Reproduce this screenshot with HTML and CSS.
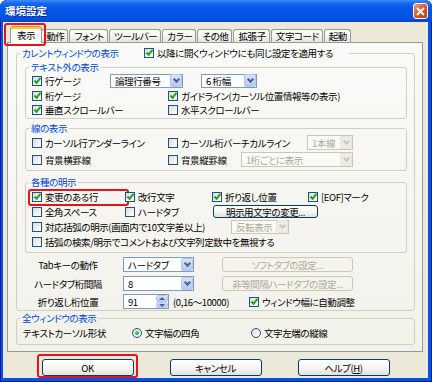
FILE: index.html
```html
<!DOCTYPE html>
<html>
<head>
	<meta charset="utf-8">
	<title>環境設定</title>
	<link rel="stylesheet" href="styles.css">
</head>
<body>
	<div class="window">
		<div class="titlebar">
			<span class="title">環境設定</span>
			<span class="close"><svg width="9" height="9" viewBox="0 0 9 9"><path d="M1 1L8 8M8 1L1 8" stroke="#fff" stroke-width="1.8"/></svg></span>
		</div>
		<div class="client">
			<div class="tabs">
				<div class="tab cur">表示</div>
				<div class="tab">動作</div>
				<div class="tab">フォント</div>
				<div class="tab">ツールバー</div>
				<div class="tab">カラー</div>
				<div class="tab">その他</div>
				<div class="tab">拡張子</div>
				<div class="tab">文字コード</div>
				<div class="tab">起動</div>
			</div>
			<div class="panel">
				<fieldset class="group outer">
					<legend class="head">
						<span class="head-text">カレントウィンドウの表示</span>
						<label class="chk on"><i></i>以降に開くウィンドウにも同じ設定を適用する</label>
					</legend>
					<div class="outer-body">
						<fieldset class="group inner gauge">
							<legend>テキスト外の表示</legend>
							<div class="row">
								<label class="chk on col-gauge"><i></i>行ゲージ</label>
								<span class="combo sel-gauge"><span>論理行番号</span><b></b></span>
								<span class="combo sel-digits"><span>6 桁幅</span><b></b></span>
							</div>
							<div class="row">
								<label class="chk on col1"><i></i>桁ゲージ</label>
								<label class="chk on"><i></i>ガイドライン(カーソル位置情報等の表示)</label>
							</div>
							<div class="row">
								<label class="chk on col1"><i></i>垂直スクロールバー</label>
								<label class="chk"><i></i>水平スクロールバー</label>
							</div>
						</fieldset>
						<fieldset class="group inner lines">
							<legend>線の表示</legend>
							<div class="row">
								<label class="chk col1"><i></i>カーソル行アンダーライン</label>
								<label class="chk col-vline"><i></i>カーソル桁バーチカルライン</label>
								<span class="combo off sel-vline"><span>1本線</span><b></b></span>
							</div>
							<div class="row">
								<label class="chk col1"><i></i>背景横罫線</label>
								<label class="chk col-rule"><i></i>背景縦罫線</label>
								<span class="combo off sel-rule"><span>1桁ごとに表示</span><b></b></span>
							</div>
						</fieldset>
						<fieldset class="group inner marks">
							<legend>各種の明示</legend>
							<div class="mark-grid">
								<label class="chk on changed"><i></i>変更のある行</label>
								<label class="chk on"><i></i>改行文字</label>
								<label class="chk on"><i></i>折り返し位置</label>
								<label class="chk on"><i></i>[EOF]マーク</label>
								<label class="chk"><i></i>全角スペース</label>
								<label class="chk"><i></i>ハードタブ</label>
								<span class="btn btn-marks">明示用文字の変更...</span>
							</div>
							<div class="row">
								<label class="chk col-paren"><i></i>対応括弧の明示(画面内で10文字差以上)</label>
								<span class="combo off sel-paren"><span>反転表示</span><b></b></span>
							</div>
							<div class="row">
								<label class="chk"><i></i>括弧の検索/明示でコメントおよび文字列定数中を無視する</label>
							</div>
						</fieldset>
						<div class="tabrows">
							<div class="tabrow">
								<span class="tabrow-label">Tabキーの動作</span>
								<span class="combo sel-tab"><span>ハードタブ</span><b></b></span>
								<span class="btn off btn-tab">ソフトタブの設定...</span>
							</div>
							<div class="tabrow">
								<span class="tabrow-label">ハードタブ桁間隔</span>
								<span class="combo sel-tab"><span>8</span><b></b></span>
								<span class="btn off btn-tab">非等間隔ハードタブの設定...</span>
							</div>
							<div class="tabrow">
								<span class="tabrow-label">折り返し桁位置</span>
								<span class="spin"><span>91</span><b><em class="up"></em><em class="down"></em></b></span>
								<span class="range">(0,16～10000)</span>
								<label class="chk on"><i></i>ウィンドウ幅に自動調整</label>
							</div>
						</div>
					</div>
				</fieldset>
				<fieldset class="group outer all">
					<legend>全ウィンドウの表示</legend>
					<div class="cursor-row">
						<span class="cursor-label">テキストカーソル形状</span>
						<label class="radio on cursor-box"><i></i>文字幅の四角</label>
						<label class="radio"><i></i>文字左端の縦線</label>
					</div>
				</fieldset>
			</div>
			<div class="buttons">
				<span class="btn ok">OK</span>
				<span class="btn">キャンセル</span>
				<span class="btn">ヘルプ(<u>H</u>)</span>
			</div>
		</div>
	</div>
</body>
</html>
```

FILE: styles.css
```css
*{
	box-sizing: border-box;
}
body{
	margin: 0;
	font-family: "Noto Sans CJK JP", "Noto Sans CJK SC", sans-serif;
	font-size: 9.5px;
	line-height: 12px;
	letter-spacing: -0.4px;
	font-feature-settings: "palt";
	color: #000;
	background-color: #fff;
}
.window{
	display: flex;
	flex-direction: column;
	width: 432px;
	height: 382px;
	background-color: #0553E3;
	border-radius: 7px 7px 0 0;
	box-shadow: inset 0 0 0 1px #0019A0;
	overflow: hidden;
}
.titlebar{
	display: flex;
	align-items: center;
	justify-content: space-between;
	height: 22px;
	padding: 0 4px 0 5px;
	background: linear-gradient(#3D8DF7 0, #1A6BF0 3px, #0859E6 7px, #0055E3 13px, #0050DC 19px, #0046CC 22px);
}
.title{
	color: #fff;
	font-size: 10.5px;
	font-weight: bold;
	letter-spacing: 0;
	text-shadow: 1px 1px 0 #0B2C8F;
}
.close{
	display: flex;
	align-items: center;
	justify-content: center;
	width: 15px;
	height: 16px;
	border: 1px solid #fff;
	border-radius: 3px;
	background: linear-gradient(135deg, #F09C7C, #D75B31 50%, #BA3A12);
}
.client{
	flex: 1;
	margin: 0 4px 4px 3px;
	background-color: #ECE9D8;
}

/* tabs */
.tabs{
	display: flex;
	align-items: flex-end;
	height: 20px;
	padding-left: 9px;
}
.tab{
	height: 13px;
	margin-right: 1px;
	padding: 0 3px 0 4px;
	border: 1px solid #919B9C;
	border-bottom: none;
	border-radius: 3px 3px 0 0;
	background: linear-gradient(#FFFFFF, #F3F2EC 60%, #E6E4DA);
	white-space: nowrap;
}
.tab.cur{
	position: relative;
	z-index: 1;
	height: 17px;
	margin: 0 -1px -1px -2px;
	padding: 2px 6px 0;
	border-top-color: #E68B2C;
	background: #FAFAF7;
	box-shadow: inset 0 2px 0 #FFC73C;
}
.tab.cur:after{
	content: "";
	position: absolute;
	left: -7px;
	right: -5px;
	top: -4px;
	bottom: -3px;
	border: 2px solid #E3141B;
	border-radius: 3px;
}
.panel{
	width: 416px;
	height: 310px;
	margin-left: 4px;
	padding: 0 7px 0 8px;
	border: 1px solid #919B9C;
	background: linear-gradient(#FAFAF8, #F2F1EA);
}

/* group boxes */
.group{
	min-width: 0;
	margin: 0;
	padding: 0;
	border: 1px solid #D0D0BF;
	border-radius: 3px;
}
.group legend{
	margin-left: 3px;
	padding: 0 2px;
	color: #0046D5;
	line-height: 12px;
}
.outer{
	margin-top: 4px;
}
.head{
	display: flex;
	width: 329px;
}
.head-text{
	width: 122px;
}
.head .chk{
	color: #000;
}
.outer-body{
	padding: 0 7px 0 8px;
}
.inner .row,
.mark-grid{
	padding-left: 6px;
}
.row{
	display: flex;
	align-items: center;
}
.gauge{
	margin-top: 2px;
	padding-bottom: 1px;
}
.gauge .row{
	height: 15px;
}
.gauge .row:last-child{
	height: 14px;
}
.lines{
	margin-top: 3px;
	padding-bottom: 2px;
}
.lines .row{
	height: 17px;
}
.marks{
	margin-top: 5px;
	padding: 1px 0 3px;
}
.marks .row{
	height: 15px;
}
.mark-grid{
	display: grid;
	grid-template-columns: 93px 87px 96px 1fr;
	grid-auto-rows: 15px;
	align-items: center;
}
.col1{
	width: 136px;
}
.col-gauge{
	width: 78px;
}
.col-vline{
	width: 139px;
}
.col-rule{
	width: 73px;
}
.col-paren{
	width: 199px;
}

/* checkbox and radio */
.chk,
.radio{
	display: flex;
	align-items: center;
	white-space: nowrap;
}
.chk i,
.radio i{
	position: relative;
	flex: none;
	width: 10px;
	height: 10px;
	margin-right: 3px;
	border: 1px solid #1C5180;
	background: linear-gradient(135deg, #DCDCD7, #FFFFFF);
}
.chk.on i:after{
	content: "";
	position: absolute;
	left: 1px;
	top: 1px;
	width: 5px;
	height: 2px;
	border-left: 2px solid #21A121;
	border-bottom: 2px solid #21A121;
	transform: rotate(-50deg);
}
.changed{
	position: relative;
}
.changed:after{
	content: "";
	position: absolute;
	left: -4px;
	right: -4px;
	top: -2px;
	bottom: -3px;
	border: 2px solid #E3141B;
	border-radius: 3px;
}
.radio i{
	margin-right: 3px;
	border-radius: 50%;
}
.radio.on i:after{
	content: "";
	position: absolute;
	left: 2px;
	top: 2px;
	width: 4px;
	height: 4px;
	border-radius: 50%;
	background: radial-gradient(circle at 35% 35%, #55D35A, #1E9A22);
}

/* combo boxes */
.combo{
	display: flex;
	align-items: center;
	height: 15px;
	border: 1px solid #7F9DB9;
	background-color: #fff;
}
.combo span{
	flex: 1;
	padding-left: 4px;
	white-space: nowrap;
}
.combo b{
	position: relative;
	flex: none;
	width: 12px;
	height: 13px;
	border: 1px solid #B5C8F3;
	border-radius: 2px;
	background: linear-gradient(#D6E2FD, #B4C9F6);
}
.combo b:after{
	content: "";
	position: absolute;
	left: 3px;
	top: 2px;
	width: 3px;
	height: 3px;
	border-right: 2px solid #4D6185;
	border-bottom: 2px solid #4D6185;
	transform: rotate(45deg);
}
.combo.off{
	border-color: #C9C7BA;
	color: #ACA899;
	background-color: #FAFAF6;
}
.combo.off b{
	border-color: #E8E6DC;
	background: #EEEDE5;
}
.combo.off b:after{
	border-color: #C9C7BA;
}
.sel-gauge{
	width: 73px;
	height: 14px;
}
.sel-digits{
	width: 56px;
	height: 14px;
	margin-left: 18px;
}
.sel-vline{
	width: 46px;
}
.sel-rule{
	width: 112px;
}
.sel-paren{
	width: 58px;
	height: 14px;
}
.sel-tab{
	width: 71px;
	margin-left: 12px;
}

/* buttons */
.btn{
	display: flex;
	align-items: center;
	justify-content: center;
	height: 15px;
	border: 1px solid #003C74;
	border-radius: 3px;
	background: linear-gradient(#FFFFFF, #F4F4F0 55%, #E3E1D8);
	white-space: nowrap;
}
.btn.off{
	border-color: #C9C7BA;
	color: #ACA899;
	background: #F5F4EA;
}
.btn-marks{
	width: 105px;
	height: 13px;
	margin-left: 1px;
}
.tabrows{
	margin-top: 2px;
}
.tabrow{
	display: flex;
	align-items: center;
	height: 19px;
}
.tabrow:last-child{
	height: 17px;
}
.tabrow-label{
	width: 86px;
	text-align: center;
}
.btn-tab{
	width: 131px;
	margin-left: 28px;
}
.spin{
	display: flex;
	align-items: center;
	width: 46px;
	height: 15px;
	margin-left: 12px;
	border: 1px solid #7F9DB9;
	background-color: #fff;
}
.spin span{
	flex: 1;
	padding-left: 4px;
}
.spin b{
	display: flex;
	flex-direction: column;
	width: 12px;
	height: 13px;
}
.spin em{
	position: relative;
	flex: 1;
	border: 1px solid #B5C8F3;
	border-radius: 2px;
	background: linear-gradient(#D6E2FD, #B4C9F6);
}
.spin em:after{
	content: "";
	position: absolute;
	left: 2px;
	border-left: 3px solid transparent;
	border-right: 3px solid transparent;
}
.spin .up:after{
	top: 1px;
	border-bottom: 3px solid #4D6185;
}
.spin .down:after{
	top: 1px;
	border-top: 3px solid #4D6185;
}
.range{
	width: 76px;
	margin-left: 4px;
}
.all{
	margin-top: 1px;
	padding: 1px 0 4px;
}
.cursor-row{
	display: flex;
	align-items: center;
	height: 15px;
	padding-left: 6px;
}
.cursor-label{
	width: 109px;
}
.cursor-box{
	width: 119px;
}
.buttons{
	display: flex;
	justify-content: center;
	gap: 36px;
	margin-top: 7px;
}
.buttons .btn{
	width: 92px;
	height: 17px;
}
.ok{
	position: relative;
}
.ok:after{
	content: "";
	position: absolute;
	left: -6px;
	right: -5px;
	top: -6px;
	bottom: -3px;
	border: 2px solid #E3141B;
	border-radius: 3px;
}
```
